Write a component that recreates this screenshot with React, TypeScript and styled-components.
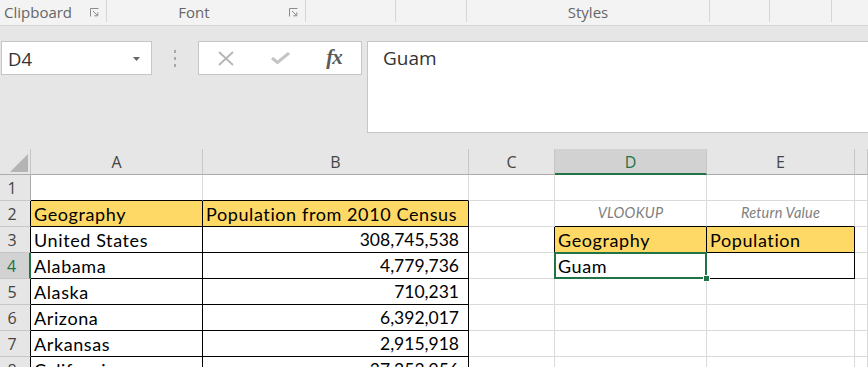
import React from 'react';
import styled, { createGlobalStyle, css } from 'styled-components';

const GREEN = '#217346';
const GRID = '#dadada';
const HEAD_LINE = '#c6c6c6';

const GlobalStyle = createGlobalStyle`
  html, body { margin: 0; padding: 0; background: #fff; overflow: hidden; }
  #root { width: 868px; height: 367px; }
`;

const Window = styled.div`
  width: 868px;
  height: 367px;
  overflow: hidden;
  display: flex;
  flex-direction: column;
  background: #e6e6e6;
  font-family: "Open Sans", "Noto Sans", sans-serif;
`;

/* ---------- Ribbon ---------- */
const Ribbon = styled.div`
  flex: none;
  height: 26px;
  box-sizing: border-box;
  display: flex;
  align-items: flex-start;
  background: #f3f3f3;
  border-bottom: 1px solid #d5d5d5;
`;

const Group = styled.div<{ $w?: number }>`
  flex: ${(p) => (p.$w ? `0 0 ${p.$w}px` : '1 1 auto')};
  height: 22px;
  box-sizing: border-box;
  display: flex;
  align-items: center;
  border-right: ${(p) => (p.$w ? '1px solid #d6d6d6' : 'none')};
`;

const GroupLabel = styled.span<{ $align?: 'left' | 'center'; $launcher?: boolean }>`
  flex: 1;
  font-size: 15px;
  line-height: 24px;
  color: #666;
  white-space: nowrap;
  text-align: ${(p) => (p.$align === 'left' ? 'left' : 'center')};
  padding-left: ${(p) => (p.$align === 'left' ? '4px' : '0')};
  padding-right: ${(p) => (p.$launcher ? '8px' : '0')};
  margin-top: 2px;
`;

const Launcher = styled.svg`
  flex: none;
  width: 9px;
  height: 9px;
  margin: 3px 7px 0 0;
`;

const LauncherIcon = () => (
  <Launcher viewBox="0 0 9 9">
    <path d="M0.5 8.5V0.5H8.5" stroke="#8c8c8c" fill="none" />
    <path d="M3 3L7.6 7.6M4.3 7.8H7.8V4.3" stroke="#8c8c8c" fill="none" />
  </Launcher>
);

/* ---------- Formula bar ---------- */
const FormulaBar = styled.div`
  flex: none;
  height: 123px;
  box-sizing: border-box;
  display: flex;
  align-items: flex-start;
  padding: 15px 0 0 1px;
`;

const NameBox = styled.div`
  flex: none;
  width: 151px;
  height: 34px;
  box-sizing: border-box;
  background: #fff;
  border: 1px solid #c6c6c6;
  display: flex;
  align-items: center;
  justify-content: space-between;
  padding: 0 11px 0 6px;
  font-size: 18.5px;
  color: #333;
`;

const DropArrow = styled.svg`
  width: 7px;
  height: 4px;
  margin-top: 1px;
`;

const Grip = styled.div`
  flex: none;
  width: 46px;
  height: 34px;
  display: flex;
  flex-direction: column;
  align-items: center;
  justify-content: center;
  gap: 4px;
`;

const GripDot = styled.span`
  width: 2px;
  height: 3px;
  background: #a8a8a8;
`;

const FxBox = styled.div`
  flex: none;
  width: 164px;
  height: 34px;
  box-sizing: border-box;
  background: #fff;
  border: 1px solid #c6c6c6;
  display: grid;
  grid-template-columns: repeat(3, 54px);
  justify-items: center;
  align-items: center;
`;

const FxText = styled.span`
  font-family: "Liberation Serif", "DejaVu Serif", serif;
  font-style: italic;
  font-weight: bold;
  font-size: 21px;
  color: #5a5a5a;
  line-height: 1;
  margin-top: -2px;
  letter-spacing: -1px;
`;

const FormulaInput = styled.div`
  flex: 1;
  height: 92px;
  margin-left: 5px;
  box-sizing: border-box;
  background: #fff;
  border: 1px solid #c6c6c6;
  border-right: none;
  padding-left: 15px;
  font-size: 19px;
  line-height: 32px;
  color: #333;
`;

/* ---------- Sheet ---------- */
const Sheet = styled.div`
  flex: 1;
  min-height: 0;
  overflow: hidden;
  background: #fff;
  display: grid;
  grid-template-columns: 31px 172px 266px 86px 152px 148px 1fr;
  grid-template-rows: 26px repeat(8, 26px);
`;

const Corner = styled.div`
  background: #e6e6e6;
  box-sizing: border-box;
  border-right: 1px solid ${HEAD_LINE};
  border-bottom: 1px solid #ababab;
  display: flex;
  align-items: flex-end;
  justify-content: flex-end;
  padding: 0 2px 2px 0;
`;

const CornerTri = styled.svg`
  width: 18px;
  height: 18px;
`;

const ColHeader = styled.div<{ $active?: boolean }>`
  box-sizing: border-box;
  display: flex;
  align-items: center;
  justify-content: center;
  font-size: 16px;
  background: ${(p) => (p.$active ? '#d2d2d2' : '#e6e6e6')};
  color: ${(p) => (p.$active ? GREEN : '#444')};
  border-right: 1px solid ${HEAD_LINE};
  border-bottom: ${(p) => (p.$active ? `2px solid ${GREEN}` : '1px solid #ababab')};
  padding-top: ${(p) => (p.$active ? '1px' : '0')};
`;

type Edge = 'grey' | 'black' | 'green';

const RowHeader = styled.div<{ $edge: Edge }>`
  box-sizing: border-box;
  display: flex;
  align-items: center;
  justify-content: center;
  padding-right: 6px;
  font-size: 16px;
  background: ${(p) => (p.$edge === 'green' ? '#d2d2d2' : '#e6e6e6')};
  color: ${(p) => (p.$edge === 'green' ? GREEN : '#444')};
  border-bottom: 1px solid ${HEAD_LINE};
  border-right: ${(p) =>
    p.$edge === 'green'
      ? `2px solid ${GREEN}`
      : p.$edge === 'black'
      ? '1px solid #000'
      : '1px solid #ababab'};
`;

const Cell = styled.div<{
  $fill?: boolean;
  $right?: string;
  $bottom?: string;
  $align?: 'left' | 'right' | 'center';
  $note?: boolean;
  $selected?: boolean;
}>`
  position: ${(p) => (p.$selected ? 'relative' : 'static')};
  box-sizing: border-box;
  min-width: 0;
  display: flex;
  align-items: flex-end;
  justify-content: ${(p) =>
    p.$align === 'right' ? 'flex-end' : p.$align === 'center' ? 'center' : 'flex-start'};
  padding: 0 ${(p) => (p.$align === 'right' ? '9px' : '3px')} 2px 3px;
  background: ${(p) => (p.$fill ? '#ffd966' : '#fff')};
  border-right: 1px solid ${(p) => p.$right || GRID};
  border-bottom: 1px solid ${(p) => p.$bottom || GRID};
  white-space: nowrap;
  font-family: Lato, "Liberation Sans", sans-serif;
  line-height: 20px;
  ${(p) =>
    p.$note
      ? css`
          font-size: 14.5px;
          font-style: italic;
          color: #7f7f7f;
          padding-bottom: 3px;
          letter-spacing: 0.2px;
        `
      : p.$align === 'right'
      ? css`
          font-size: 17.5px;
          color: #000;
        `
      : css`
          font-size: 18px;
          letter-spacing: 0.6px;
          color: #000;
        `}
`;

const Selection = styled.div`
  position: absolute;
  top: -1px;
  left: -1px;
  right: -1px;
  bottom: -1px;
  border: 2px solid ${GREEN};
  pointer-events: none;
  z-index: 2;
`;

const FillHandle = styled.div`
  position: absolute;
  right: -4px;
  bottom: -4px;
  width: 7px;
  height: 7px;
  box-sizing: border-box;
  background: ${GREEN};
  border: 1px solid #fff;
  z-index: 3;
`;

type CellData = {
  t?: string;
  fill?: boolean;
  box?: boolean;
  align?: 'left' | 'right' | 'center';
  note?: boolean;
  selected?: boolean;
};

const Y = true;
const rows: CellData[][] = [
  [{}, {}, {}, {}, {}, {}],
  [
    { t: 'Geography', fill: Y, box: Y },
    { t: 'Population from 2010 Census', fill: Y, box: Y },
    {},
    { t: 'VLOOKUP', note: Y, align: 'center' },
    { t: 'Return Value', note: Y, align: 'center' },
    {},
  ],
  [
    { t: 'United States', box: Y },
    { t: '308,745,538', box: Y, align: 'right' },
    {},
    { t: 'Geography', fill: Y, box: Y },
    { t: 'Population', fill: Y, box: Y },
    {},
  ],
  [
    { t: 'Alabama', box: Y },
    { t: '4,779,736', box: Y, align: 'right' },
    {},
    { t: 'Guam', box: Y, selected: Y },
    { box: Y },
    {},
  ],
  [{ t: 'Alaska', box: Y }, { t: '710,231', box: Y, align: 'right' }, {}, {}, {}, {}],
  [{ t: 'Arizona', box: Y }, { t: '6,392,017', box: Y, align: 'right' }, {}, {}, {}, {}],
  [{ t: 'Arkansas', box: Y }, { t: '2,915,918', box: Y, align: 'right' }, {}, {}, {}, {}],
  [{ t: 'California', box: Y }, { t: '37,253,956', box: Y, align: 'right' }, {}, {}, {}, {}],
];

const cols = ['A', 'B', 'C', 'D', 'E', ''];

const isBoxed = (r: number, c: number) => !!rows[r]?.[c]?.box;

export default function App() {
  return (
    <Window>
      <GlobalStyle />
      <Ribbon>
        <Group $w={107}>
          <GroupLabel $align="left">Clipboard</GroupLabel>
          <LauncherIcon />
        </Group>
        <Group $w={199}>
          <GroupLabel $launcher>Font</GroupLabel>
          <LauncherIcon />
        </Group>
        <Group $w={90} />
        <Group $w={71} />
        <Group $w={243}>
          <GroupLabel>Styles</GroupLabel>
        </Group>
        <Group $w={60} />
        <Group $w={62} />
        <Group />
      </Ribbon>

      <FormulaBar>
        <NameBox>
          <span>D4</span>
          <DropArrow viewBox="0 0 7 4">
            <path d="M0 0H7L3.5 4Z" fill="#666" />
          </DropArrow>
        </NameBox>
        <Grip>
          <GripDot />
          <GripDot />
          <GripDot />
        </Grip>
        <FxBox>
          <svg width="16" height="15" viewBox="0 0 16 15">
            <path d="M1 1L15 14M15 1L1 14" stroke="#b5b5b5" strokeWidth="1.8" fill="none" />
          </svg>
          <svg width="19" height="12" viewBox="0 0 19 12">
            <path d="M1 6L6.5 10.5L18 1" stroke="#c4c4c4" strokeWidth="3" fill="none" />
          </svg>
          <FxText>fx</FxText>
        </FxBox>
        <FormulaInput>Guam</FormulaInput>
      </FormulaBar>

      <Sheet>
        <Corner>
          <CornerTri viewBox="0 0 18 18">
            <path d="M18 0V18H0Z" fill="#b4b4b4" />
          </CornerTri>
        </Corner>
        {cols.map((c) => (
          <ColHeader key={`h${c}`} $active={c === 'D'}>
            {c}
          </ColHeader>
        ))}
        {rows.map((row, r) => (
          <React.Fragment key={r}>
            <RowHeader $edge={r === 3 ? 'green' : isBoxed(r, 0) ? 'black' : 'grey'}>{r + 1}</RowHeader>
            {row.map((cell, c) => {
              const right = cell.box || isBoxed(r, c + 1) ? '#000' : undefined;
              const bottom = cell.box || isBoxed(r + 1, c) ? '#000' : undefined;
              return (
                <Cell
                  key={c}
                  $fill={cell.fill}
                  $right={right}
                  $bottom={bottom}
                  $align={cell.align}
                  $note={cell.note}
                  $selected={cell.selected}
                >
                  {cell.t}
                  {cell.selected && (
                    <>
                      <Selection />
                      <FillHandle />
                    </>
                  )}
                </Cell>
              );
            })}
          </React.Fragment>
        ))}
      </Sheet>
    </Window>
  );
}
